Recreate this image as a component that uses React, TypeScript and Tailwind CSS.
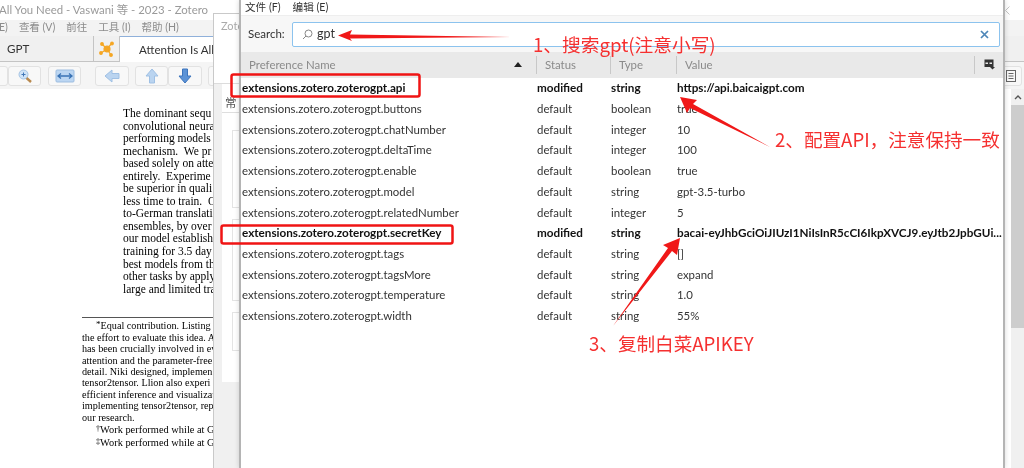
import React from 'react';

const PDF_LINES = [
  'The dominant sequ',
  'convolutional neura',
  'performing models',
  'mechanism.  We pr',
  'based solely on atten',
  'entirely.  Experime',
  'be superior in quali',
  'less time to train.  O',
  'to-German translati',
  'ensembles, by over 2',
  'our model establishe',
  'training for 3.5 day',
  'best models from th',
  'other tasks by apply',
  'large and limited tra',
];

const FOOT_LINES = [
  'the effort to evaluate this idea. A',
  'has been crucially involved in ev',
  'attention and the parameter-free',
  'detail. Niki designed, implemen',
  'tensor2tensor. Llion also experi',
  'efficient inference and visualizat',
  'implementing tensor2tensor, rep',
  'our research.',
];

const PREFS = [
  { name: 'extensions.zotero.zoterogpt.api', status: 'modified', type: 'string', value: 'https://api.baicaigpt.com', bold: true },
  { name: 'extensions.zotero.zoterogpt.buttons', status: 'default', type: 'boolean', value: 'true' },
  { name: 'extensions.zotero.zoterogpt.chatNumber', status: 'default', type: 'integer', value: '10' },
  { name: 'extensions.zotero.zoterogpt.deltaTime', status: 'default', type: 'integer', value: '100' },
  { name: 'extensions.zotero.zoterogpt.enable', status: 'default', type: 'boolean', value: 'true' },
  { name: 'extensions.zotero.zoterogpt.model', status: 'default', type: 'string', value: 'gpt-3.5-turbo' },
  { name: 'extensions.zotero.zoterogpt.relatedNumber', status: 'default', type: 'integer', value: '5' },
  { name: 'extensions.zotero.zoterogpt.secretKey', status: 'modified', type: 'string', value: 'bacai-eyJhbGciOiJIUzI1NiIsInR5cCI6IkpXVCJ9.eyJtb2JpbGUi...', bold: true },
  { name: 'extensions.zotero.zoterogpt.tags', status: 'default', type: 'string', value: '[]' },
  { name: 'extensions.zotero.zoterogpt.tagsMore', status: 'default', type: 'string', value: 'expand' },
  { name: 'extensions.zotero.zoterogpt.temperature', status: 'default', type: 'string', value: '1.0' },
  { name: 'extensions.zotero.zoterogpt.width', status: 'default', type: 'string', value: '55%' },
];

const ToolButton: React.FC<{ className: string; children?: React.ReactNode }> = ({ className, children }) => (
  <div className={`flex h-5 shrink-0 items-center justify-center rounded-[3px] border border-[#e2e2e2] bg-[#f8f8f8] ${className}`}>
    {children}
  </div>
);

const BackWindow = () => (
  <div className="absolute inset-0 flex flex-col bg-white font-['Lato','Noto_Sans_CJK_SC',sans-serif]">
    <div className="flex h-5 items-center justify-between whitespace-nowrap pr-[14px] text-[11.4px] text-[#9a9a9a]">
      <span className="-ml-px">All You Need - Vaswani 等 - 2023 - Zotero</span>
      <svg width="5" height="9" viewBox="0 0 5 9" fill="none" stroke="#c4c4c4">
        <path d="M4.500.500.500 4.500l4 4" />
      </svg>
    </div>
    <div className="flex h-4 items-center gap-[11px] bg-[#f3f3f3] text-[10.5px] text-[#8c8c8c]">
      <span className="-ml-[1px]">E)</span>
      <span>查看 (V)</span>
      <span>前往</span>
      <span>工具 (I)</span>
      <span>帮助 (H)</span>
    </div>
    <div className="flex h-[26px] bg-[#f0f0f0] text-[11.6px] text-[#333]">
      <div className="flex w-[94px] items-center border-r border-b border-[#c4c4c4] pl-[7px]">GPT</div>
      <div className="flex w-[26px] items-center justify-center border-r border-b border-[#c4c4c4]">
        <svg width="16" height="16" viewBox="0 0 16 16" fill="#f5a623" stroke="#f5a623" strokeWidth="1.2">
          <path d="M3 3 8 8 13 2M2 12 8 8 12 14" fill="none" />
          <circle cx="8" cy="8" r="3" />
          <circle cx="3" cy="3" r="1.3" />
          <circle cx="13" cy="2.5" r="1.3" />
          <circle cx="2" cy="12" r="1.3" />
          <circle cx="12" cy="14" r="1.3" />
        </svg>
      </div>
      <div className="flex w-[120px] items-center whitespace-nowrap border-t border-[#8fb0da] bg-white pl-[19px]">Attention Is All</div>
      <div className="flex-1 border-b border-[#c4c4c4]" />
    </div>
    <div className="flex h-[27px] items-center bg-[#f5f5f5]">
      <ToolButton className="ml-[-24px] w-8" />
      <ToolButton className="w-[33px]">
        <svg width="16" height="16" viewBox="0 0 16 16">
          <path d="M9 9.500 14 14" stroke="#b8894f" strokeWidth="2.400" />
          <circle cx="6.500" cy="6.500" r="4.500" fill="#cfe3f7" stroke="#a5c4e4" />
          <path d="M4.500 6.500h4M6.500 4.500v4" stroke="#3f76b8" />
        </svg>
      </ToolButton>
      <ToolButton className="ml-[7px] w-[33px]">
        <svg width="20" height="14" viewBox="0 0 20 14">
          <rect x="1" y="1" width="18" height="12" rx="1" fill="#bcd6f2" stroke="#9dbde0" />
          <path d="M3 7h14M6 4.500 3 7l3 2.500M14 4.500 17 7l-3 2.500" fill="none" stroke="#3a73b5" strokeWidth="1.300" />
        </svg>
      </ToolButton>
      <ToolButton className="ml-[14px] w-[34px]">
        <svg width="16" height="14" viewBox="0 0 16 14">
          <path d="M1 7 8 1v3.500h7v5H8V13Z" fill="#bad4f0" stroke="#9fc0e4" />
        </svg>
      </ToolButton>
      <ToolButton className="ml-[6px] w-[33px]">
        <svg width="14" height="16" viewBox="0 0 14 16">
          <path d="M7 1 13 8H9.500v7h-5V8H1Z" fill="#bad4f0" stroke="#9fc0e4" />
        </svg>
      </ToolButton>
      <ToolButton className="w-[34px]">
        <svg width="14" height="16" viewBox="0 0 14 16">
          <path d="M7 15 13 8H9.500V1h-5v7H1Z" fill="#5c93d6" stroke="#3d75bd" />
        </svg>
      </ToolButton>
      <ToolButton className="ml-[6px] w-8" />
      <div className="flex-1" />
      <ToolButton className="mr-[2px] w-[22px]">
        <svg width="12" height="14" viewBox="0 0 12 14" fill="none" stroke="#666">
          <rect x="1.500" y="1.500" width="9" height="11" />
          <path d="M3.500 4.500h5M3.500 7h5M3.500 9.500h5" />
        </svg>
      </ToolButton>
    </div>
    <div className="flex min-h-0 flex-1 font-['Liberation_Serif',serif] text-black">
      <div className="w-[82px] shrink-0" />
      <div className="flex-1">
        <div className="ml-[41px] mt-[18px] whitespace-pre text-[11.5px] leading-[12.55px]">
          {PDF_LINES.map((line) => (
            <div key={line}>{line}</div>
          ))}
        </div>
        <div className="mt-[22px] w-[140px] border-t border-[#555]" />
        <div className="mt-[2px] whitespace-pre text-[10.2px] leading-[11.45px]">
          <div className="pl-[14px]">
            <span className="relative -top-[2px] text-[9px] leading-none">*</span>Equal contribution. Listing o
          </div>
          {FOOT_LINES.map((line) => (
            <div key={line}>{line}</div>
          ))}
          <div className="mt-[1px] pl-[14px] text-[10.4px] leading-[12.8px]">
            <span className="relative -top-[2px] text-[8px] leading-none">†</span>Work performed while at G
          </div>
          <div className="pl-[14px] text-[10.4px] leading-[12.8px]">
            <span className="relative -top-[2px] text-[8px] leading-none">‡</span>Work performed while at G
          </div>
        </div>
      </div>
      <div className="flex w-[13px] shrink-0 flex-col self-stretch bg-[#f0f0f0]">
        <div className="flex h-[16px] items-center justify-center">
          <svg width="8" height="5" viewBox="0 0 8 5" fill="none" stroke="#555" strokeWidth="1.400">
            <path d="M1 4 4 1l3 3" />
          </svg>
        </div>
        <div className="h-[223px] bg-[#cdcdcd]" />
      </div>
    </div>
  </div>
);

const MiddleWindow = () => (
  <div className="absolute bottom-0 left-[213px] top-[13px] flex w-[27px] flex-col overflow-hidden border-l border-t border-[#c9c9c9] bg-[#f0f0f0] font-['Lato','Noto_Sans_CJK_SC',sans-serif]">
    <div className="h-[70px] shrink-0 whitespace-nowrap border-b border-[#dcdcdc] bg-white pl-[7px] pt-[4px] text-[11px] text-[#aaa]">Zote</div>
    <div className="ml-[8px] flex h-[298px] w-[40px] shrink-0 flex-col bg-white">
      <div className="mt-[10px] h-[19px] whitespace-nowrap border-b border-[#dedede] pl-[3px] text-[11.5px] leading-[18px] text-[#555]">常</div>
      <div className="ml-[10px] mt-[17px] h-[78px] border border-[#e4e4e4]" />
      <div className="ml-[10px] mt-[11px] h-[82px] border border-[#e4e4e4]" />
      <div className="ml-[10px] mt-[11px] h-[39px] border border-[#e4e4e4]" />
    </div>
  </div>
);

const FrontWindow = () => (
  <div className="absolute bottom-0 left-[239px] top-0 flex w-[766px] flex-col border-l-2 border-r-2 border-[#b4b4b4] bg-white font-['Lato','Noto_Sans_CJK_SC',sans-serif] text-[#333] shadow-[0_0_5px_rgba(0,0,0,0.16)]">
    <div className="flex h-[15px] items-center gap-[12px] pl-[4px] text-[10.6px]">
      <span>文件 (F)</span>
      <span>编辑 (E)</span>
    </div>
    <div className="flex h-[37px] items-center border-t border-[#eee] bg-[#f7f7f7] pl-[7px] pr-[3px]">
      <span className="w-[44px] text-[11.5px]">Search:</span>
      <div className="flex h-[25px] flex-1 items-center rounded-[2px] border border-[#8cc3ee] bg-white pl-[9px] pr-[10px]">
        <svg width="11" height="11" viewBox="0 0 11 11" fill="none" stroke="#888" strokeWidth="1">
          <circle cx="6.500" cy="4.500" r="3.500" />
          <path d="M4 7 1 10" />
        </svg>
        <span className="ml-[4px] text-[12.5px] leading-none">gpt</span>
        <svg className="ml-auto" width="9" height="9" viewBox="0 0 9 9" stroke="#4d86b8" strokeWidth="1.700">
          <path d="m1 1 7 7M8 1 1 8" />
        </svg>
      </div>
    </div>
    <div className="grid h-[25.5px] shrink-0 grid-cols-[295px_74px_66px_298px_1fr] items-center bg-[#e9e9e9] text-[11.4px] text-[#8a8a8a]">
      <div className="flex items-center pl-[8px] pr-[14px]">
        Preference Name
        <svg className="ml-auto" width="8" height="5" viewBox="0 0 8 5" fill="#222">
          <path d="M4 0 8 5H0Z" />
        </svg>
      </div>
      <div className="h-[18px] border-l border-[#c8c8c8] pl-[8px] leading-[18px]">Status</div>
      <div className="h-[18px] border-l border-[#c8c8c8] pl-[8px] leading-[18px]">Type</div>
      <div className="h-[18px] border-l border-[#c8c8c8] pl-[8px] leading-[18px]">Value</div>
      <div className="flex h-[18px] items-center justify-center border-l border-[#c8c8c8]">
        <svg width="11" height="11" viewBox="0 0 11 11">
          <rect x="0.500" y="0.500" width="9" height="7.500" fill="#333" />
          <path d="M1.500 3.500h2.500v1.500H1.500ZM5.500 3.500H8v1.500H5.500Z" fill="#e9e9e9" />
          <path d="M6 8h5l-2.500 2.500Z" fill="#333" />
        </svg>
      </div>
    </div>
    <div className="text-[#333]">
      {PREFS.map((pref) => (
        <div
          key={pref.name}
          className={`grid h-[20.73px] grid-cols-[295px_74px_66px_1fr] items-center whitespace-nowrap ${pref.bold ? 'text-[11.7px] font-bold text-[#111]' : 'text-[11.4px]'}`}
        >
          <div className="pl-px">{pref.name}</div>
          <div className="pl-px">{pref.status}</div>
          <div className="pl-px">{pref.type}</div>
          <div className="pl-px">{pref.value}</div>
        </div>
      ))}
    </div>
  </div>
);

const Annotations = () => (
  <>
    <svg className="absolute inset-0" width="1024" height="468" viewBox="0 0 1024 468" fill="none">
      <rect x="231.500" y="74.500" width="188" height="22" rx="2" stroke="#f01414" strokeWidth="2.500" />
      <rect x="221.500" y="225.500" width="231" height="18" rx="2" stroke="#f01414" strokeWidth="2.500" />
      <path d="M338 35.500 352 30 350 34.500 511 37 350 38.500 352 41Z" fill="#f01818" />
      <path d="M680 97 697 100 693 104 770 147 690 108 687 113Z" fill="#f01818" />
      <path d="M680 238 677 255 672 251 613 326 668 248 663 245Z" fill="#f01818" />
    </svg>
    <div className="absolute left-[533px] top-[31px] whitespace-nowrap font-['Noto_Sans_CJK_SC',sans-serif] text-[18.7px] leading-[26px] text-[#f53030]">1、搜索gpt(注意小写)</div>
    <div className="absolute left-[775px] top-[126px] whitespace-nowrap font-['Noto_Sans_CJK_SC',sans-serif] text-[18.6px] leading-[26px] text-[#f53030]">2、配置API，注意保持一致</div>
    <div className="absolute left-[589px] top-[330px] whitespace-nowrap font-['Noto_Sans_CJK_SC',sans-serif] text-[18.6px] leading-[26px] text-[#f53030]">3、复制白菜APIKEY</div>
  </>
);

export default function App() {
  return (
    <div className="relative h-[468px] w-[1024px] overflow-hidden bg-white blur-[0.35px]">
      <BackWindow />
      <MiddleWindow />
      <FrontWindow />
      <Annotations />
    </div>
  );
}
